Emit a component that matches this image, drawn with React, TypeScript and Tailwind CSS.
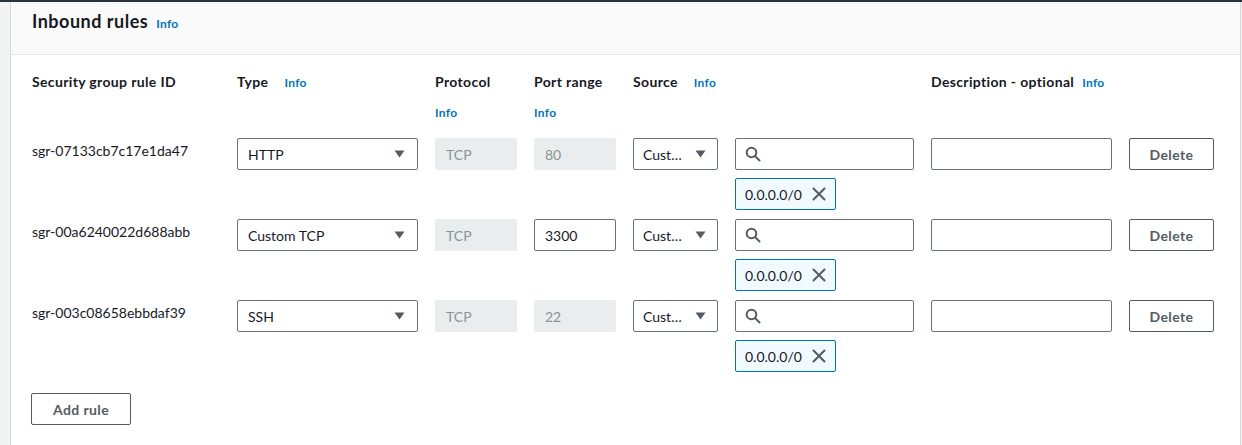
import React from 'react';

const rules = [
  { id: 'sgr-07133cb7c17e1da47', type: 'HTTP', port: '80', portEditable: false },
  { id: 'sgr-00a6240022d688abb', type: 'Custom TCP', port: '3300', portEditable: true },
  { id: 'sgr-003c08658ebbdaf39', type: 'SSH', port: '22', portEditable: false },
];

function Caret() {
  return (
    <svg width="11" height="8" viewBox="0 0 11 8" className="shrink-0">
      <path d="M0.5 0.5 H10.5 L5.5 7.5 Z" fill="#545b64" />
    </svg>
  );
}

function Info({ className = '' }: { className?: string }) {
  return <span className={`text-[12px] font-bold tracking-[0.3px] text-[#0073bb] ${className}`}>Info</span>;
}

export default function App() {
  return (
    <div className="w-[1242px] h-[445px] bg-[#f2f3f3] overflow-hidden text-[#16191f]" style={{ fontFamily: 'Lato, "Noto Sans", sans-serif' }}>
      <div className="h-[2px] bg-[#2a323d]" />
      <div className="ml-[10px] mr-[1px] h-[443px] bg-white border-x border-[#d5dbdb]">
        {/* header */}
        <div className="h-[53px] bg-[#fafafa] border-b border-[#e5e7e8] px-[21px] pt-[8px] flex items-baseline gap-[8px]">
          <span className="text-[18px] leading-[22px] font-bold tracking-[0.5px]">Inbound rules</span>
          <Info />
        </div>

        <div className="px-[21px] pt-[16px]">
          <div className="grid grid-cols-[188px_181px_82px_82px_85px_179px_181px_85px] gap-x-[17px] text-[14px] tracking-[0.35px]">
            {/* column heads */}
            <div className="font-bold leading-[22px]">Security group rule ID</div>
            <div className="font-bold leading-[22px] flex items-baseline gap-[16px]">Type <Info /></div>
            <div className="flex flex-col">
              <span className="font-bold leading-[22px]">Protocol</span>
              <Info className="mt-[12px] leading-[16px]" />
            </div>
            <div className="flex flex-col">
              <span className="font-bold leading-[22px]">Port range</span>
              <Info className="mt-[12px] leading-[16px]" />
            </div>
            <div className="font-bold leading-[22px] col-span-2 flex items-baseline gap-[16px]">Source <Info /></div>
            <div className="font-bold leading-[22px] col-span-2 flex items-baseline gap-[8px] whitespace-nowrap">Description - optional <Info /></div>
          </div>

          <div className="mt-[17px] grid grid-cols-[188px_181px_82px_82px_85px_179px_181px_85px] gap-x-[17px] gap-y-[9px] text-[14px] items-start">
            {rules.map((r) => (
              <React.Fragment key={r.id}>
                <div className="leading-[22px] pt-[2px]">{r.id}</div>
                <div className="h-[32px] border border-[#687078] rounded-[2px] flex items-center justify-between pl-[10px] pr-[12px]">
                  <span>{r.type}</span>
                  <Caret />
                </div>
                <div className="h-[32px] bg-[#eaeded] rounded-[2px] flex items-center px-[11px] text-[#879596]">TCP</div>
                {r.portEditable ? (
                  <div className="h-[32px] border border-[#687078] rounded-[2px] flex items-center px-[10px]">{r.port}</div>
                ) : (
                  <div className="h-[32px] bg-[#eaeded] rounded-[2px] flex items-center px-[11px] text-[#879596]">{r.port}</div>
                )}
                <div className="h-[32px] border border-[#687078] rounded-[2px] flex items-center justify-between pl-[9px] pr-[11px]">
                  <span>Cust…</span>
                  <Caret />
                </div>
                <div className="flex flex-col gap-[8px]">
                  <div className="h-[32px] border border-[#687078] rounded-[2px] flex items-center px-[9px]">
                    <svg width="16" height="16" viewBox="0 0 16 16" fill="none" stroke="#545b64" strokeWidth="2">
                      <circle cx="6.5" cy="6.5" r="4.8" />
                      <path d="M10 10 L14.5 14.5" strokeLinecap="round" />
                    </svg>
                  </div>
                  <div className="self-start w-[101px] h-[32px] bg-[#f1faff] border border-[#0073bb] rounded-[2px] flex items-center justify-between pl-[9px] pr-[8px]">
                    <span>0.0.0.0/0</span>
                    <svg width="16" height="16" viewBox="0 0 16 16" fill="none" stroke="#545b64" strokeWidth="2" strokeLinecap="round">
                      <path d="M2.5 2.5 L13.5 13.5 M13.5 2.5 L2.5 13.5" />
                    </svg>
                  </div>
                </div>
                <div className="h-[32px] border border-[#687078] rounded-[2px]" />
                <button className="h-[32px] border border-[#545b64] rounded-[2px] bg-white font-bold tracking-[0.4px] text-[#545b64]">Delete</button>
              </React.Fragment>
            ))}
          </div>

          <button className="mt-[21px] ml-[-1px] w-[100px] h-[32px] border border-[#545b64] rounded-[2px] bg-white font-bold tracking-[0.4px] text-[14px] text-[#545b64]">Add rule</button>
        </div>
      </div>
    </div>
  );
}
